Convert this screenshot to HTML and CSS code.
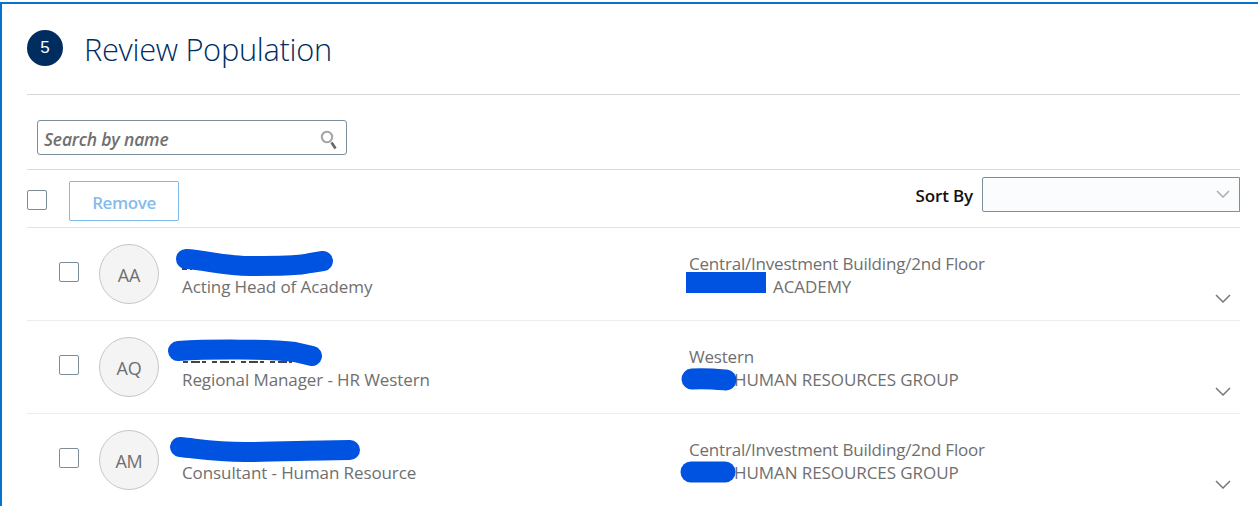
FILE: index.html
```html
<!DOCTYPE html>
<html lang="en">
<head>
<meta charset="utf-8">
<title>Review Population</title>
<link rel="stylesheet" href="styles.css">
</head>
<body>
<main class="panel">
  <header class="heading">
    <span class="step">5</span>
    <h1 class="title">Review Population</h1>
  </header>
  <div class="search-bar">
    <div class="search">
      <span class="search-text">Search by name</span>
      <svg class="search-icon" width="18" height="22" viewBox="0 0 18 22"><circle cx="7" cy="8" r="5.2" fill="none" stroke="#a3a3a3" stroke-width="2"/><path d="M11.500 13.500l4 6" stroke="#666" stroke-width="2.600" fill="none"/></svg>
    </div>
  </div>
  <div class="toolbar">
    <span class="check"></span>
    <button class="remove" type="button">Remove</button>
    <div class="sort">
      <span class="sort-label">Sort By</span>
      <div class="select">
        <svg class="chev" width="14" height="8" viewBox="0 0 14 8"><path d="M1 1l6 6 6-6" fill="none" stroke="#a9adb0" stroke-width="1.500"/></svg>
      </div>
    </div>
  </div>
  <section class="row">
    <span class="check"></span>
    <span class="avatar">AA</span>
    <div class="person"><div class="name"></div><div>Acting Head of Academy</div></div>
    <div class="place"><div>Central/Investment Building/2nd Floor</div><div class="org org-academy">ACADEMY</div></div>
    <svg class="chev-row" width="16" height="9" viewBox="0 0 16 9"><path d="M1 1l7 7 7-7" fill="none" stroke="#787878" stroke-width="1.500"/></svg>
    <svg class="ink" viewBox="27 228 1213 92"><path class="trace" d="M182 269H192"/><path class="stroke" d="M186 259C205 260 225 266 250 266S300 266 310 263L323 261"/><path class="fill" d="M686 272H766V293H686Z"/></svg>
  </section>
  <section class="row">
    <span class="check"></span>
    <span class="avatar">AQ</span>
    <div class="person"><div class="name"></div><div>Regional Manager - HR Western</div></div>
    <div class="place"><div>Western</div><div class="org">HUMAN RESOURCES GROUP</div></div>
    <svg class="chev-row" width="16" height="9" viewBox="0 0 16 9"><path d="M1 1l7 7 7-7" fill="none" stroke="#787878" stroke-width="1.500"/></svg>
    <svg class="ink" viewBox="27 321 1213 92"><path class="trace" d="M183 362H292"/><path class="stroke" d="M178 351C210 349 270 349 295 352L312 356"/><path class="blob" d="M692 379C705 378 715 379 726 380"/></svg>
  </section>
  <section class="row">
    <span class="check"></span>
    <span class="avatar">AM</span>
    <div class="person"><div class="name"></div><div>Consultant - Human Resource</div></div>
    <div class="place"><div>Central/Investment Building/2nd Floor</div><div class="org">HUMAN RESOURCES GROUP</div></div>
    <svg class="chev-row" width="16" height="9" viewBox="0 0 16 9"><path d="M1 1l7 7 7-7" fill="none" stroke="#787878" stroke-width="1.500"/></svg>
    <svg class="ink" viewBox="27 414 1213 92"><path class="stroke" d="M180 447C200 449 215 452 245 452S320 450 350 450"/><path class="blob" d="M691 472H725"/></svg>
  </section>
</main>
</body>
</html>
```
FILE: styles.css
```css
html, body {
  margin: 0;
  height: 100%;
  overflow: hidden;
  background: #fff;
}
.panel {
  box-sizing: border-box;
  height: 504px;
  padding: 0 18px 0 25px;
  border-top: 2px solid #0572ce;
  border-left: 2px solid #0572ce;
  margin-top: 2px;
  overflow: hidden;
  font-family: "Open Sans", "Noto Sans", sans-serif;
  font-size: 17px;
  color: #6f6f6f;
}
.heading {
  display: flex;
  align-items: center;
  gap: 21px;
  height: 91px;
  box-sizing: border-box;
  border-bottom: 1px solid #d6d6d6;
}
.step {
  flex: none;
  display: flex;
  align-items: center;
  justify-content: center;
  width: 36px;
  height: 36px;
  margin-top: -2px;
  border-radius: 50%;
  background: #002d5f;
  color: #fff;
  font-family: "Liberation Sans", sans-serif;
  font-size: 17px;
}
.title {
  margin: 0;
  font-size: 30.800px;
  font-weight: 300;
  letter-spacing: -0.3px;
  color: #002d5f;
}
.search-bar {
  height: 75px;
  box-sizing: border-box;
  padding: 25px 0 0 10px;
  border-bottom: 1px solid #d6dce0;
}
.search {
  box-sizing: border-box;
  display: flex;
  align-items: center;
  justify-content: space-between;
  width: 310px;
  height: 35px;
  padding: 0 8px 0 6px;
  border: 1px solid #7c8e9a;
  border-radius: 3px;
}
.search-text {
  padding-top: 3px;
  font-size: 17.500px;
  font-style: italic;
  font-weight: 600;
  letter-spacing: -0.2px;
  color: #707070;
}
.search-icon {
  margin-top: 4px;
}
.toolbar {
  display: flex;
  align-items: center;
  height: 58px;
  box-sizing: border-box;
  border-bottom: 1px solid #dfe3e6;
}
.check {
  flex: none;
  box-sizing: border-box;
  width: 20px;
  height: 20px;
  background: #fff;
  border: 1px solid #7c8e9a;
  border-radius: 2px;
}
.toolbar .check {
  margin-top: 2px;
}
.remove {
  box-sizing: border-box;
  width: 110px;
  height: 40px;
  margin: 4px 0 0 22px;
  padding: 4px 0 0;
  background: #fff;
  border: 1px solid #7fbaec;
  border-radius: 2px;
  font-family: inherit;
  font-size: 17px;
  font-weight: 600;
  letter-spacing: -0.4px;
  color: #85bcee;
}
.sort {
  display: flex;
  align-items: center;
  gap: 9px;
  margin-left: auto;
  margin-top: -9px;
}
.sort-label {
  padding-top: 2px;
  font-size: 17px;
  font-weight: 600;
  letter-spacing: -0.15px;
  color: #111;
}
.select {
  box-sizing: border-box;
  display: flex;
  align-items: center;
  justify-content: flex-end;
  width: 258px;
  height: 35px;
  padding-right: 9px;
  background: #fbfcfe;
  border: 1px solid #7c8e9a;
  border-radius: 2px 0 0 2px;
}
.row {
  position: relative;
  box-sizing: border-box;
  display: flex;
  align-items: center;
  flex: none;
  height: 93px;
  padding-left: 32px;
  border-bottom: 1px solid #ececec;
}
.row .check {
  margin-top: -4px;
}
.avatar {
  flex: none;
  box-sizing: border-box;
  display: flex;
  align-items: center;
  justify-content: center;
  width: 60px;
  height: 60px;
  margin-left: 20px;
  padding-top: 2px;
  border: 1px solid #c6c6c6;
  border-radius: 50%;
  background: #f4f4f4;
  font-size: 18px;
  letter-spacing: -0.2px;
}
.person {
  width: 507px;
  margin-left: 23px;
  padding-top: 2px;
  line-height: 23px;
  letter-spacing: -0.1px;
}
.name {
  height: 23px;
}
.place {
  padding-top: 2px;
  line-height: 23px;
  letter-spacing: -0.2px;
}
.org {
  padding-left: 45px;
  letter-spacing: -0.07px;
}
.org-academy {
  padding-left: 84px;
}
.chev-row {
  position: absolute;
  right: 9px;
  bottom: 17px;
}
.ink {
  position: absolute;
  left: 0;
  top: 0;
  width: 1213px;
  height: 92px;
  pointer-events: none;
}
.trace {
  fill: none;
  stroke: #444;
  stroke-width: 2px;
  stroke-dasharray: 5 3 9 2 4 6;
}
.stroke {
  fill: none;
  stroke: #0052e0;
  stroke-width: 20px;
  stroke-linecap: round;
}
.blob {
  fill: none;
  stroke: #0052e0;
  stroke-width: 21px;
  stroke-linecap: round;
}
.fill {
  fill: #0052e0;
}
```
